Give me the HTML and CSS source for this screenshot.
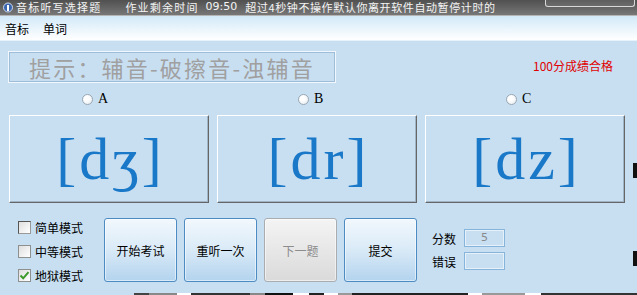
FILE: index.html
```html
<!DOCTYPE html>
<html lang="zh">
<head>
  <meta charset="UTF-8">
  <title>音标听写选择题</title>
  <link rel="stylesheet" href="styles.css">
</head>
<body>
  <div class="window">
    <header class="titlebar">
      <svg class="app-icon" width="10" height="11" viewBox="0 0 10 11">
        <circle cx="5" cy="5.5" r="4.5" fill="#3a66b0" stroke="#cfd8e8" stroke-width="1"/>
        <rect x="4" y="3" width="2" height="6" fill="#fff"/>
      </svg>
      <span class="title-name">音标听写选择题</span>
      <span class="title-timer">作业剩余时间</span>
      <span class="title-time">09:50</span>
      <span class="title-note">超过4秒钟不操作默认你离开软件自动暂停计时的</span>
      <span class="title-btn"></span>
    </header>
    <nav class="menubar">
      <span>音标</span>
      <span>单词</span>
    </nav>
    <main class="main">
      <div class="hint-row">
        <div class="hint">提示：辅音-破擦音-浊辅音</div>
        <div class="pass">100分成绩合格</div>
      </div>
      <div class="options">
        <label class="radio"><span class="dot"></span>A</label>
        <label class="radio"><span class="dot"></span>B</label>
        <label class="radio"><span class="dot"></span>C</label>
      </div>
      <div class="cards">
        <button class="card">[dʒ]</button>
        <button class="card">[dr]</button>
        <button class="card">[dz]</button>
      </div>
      <div class="controls">
        <div class="modes">
          <label class="check"><span class="box focus"></span>简单模式</label>
          <label class="check"><span class="box"></span>中等模式</label>
          <label class="check">
            <span class="box">
              <svg width="11" height="11" viewBox="0 0 11 11"><path d="M1.5 5.5 L4.2 8.3 L9.5 2.2" fill="none" stroke="#3c9a2a" stroke-width="2"/></svg>
            </span>地狱模式
          </label>
        </div>
        <button class="btn">开始考试</button>
        <button class="btn">重听一次</button>
        <button class="btn disabled">下一题</button>
        <button class="btn">提交</button>
        <div class="score">
          <div class="field"><span class="field-label">分数</span><span class="input">5</span></div>
          <div class="field"><span class="field-label">错误</span><span class="input"></span></div>
        </div>
      </div>
    </main>
    <div class="taskbar"></div>
    <span class="edge edge-top"></span>
    <span class="edge edge-bottom"></span>
  </div>
</body>
</html>
```

FILE: styles.css
```css
:root {
  --bg: #c8dff2;
  --ink: #000;
  --blue: #1a78c8;
  --cjk: "Noto Sans CJK SC", "Noto Sans", sans-serif;
}
* { box-sizing: border-box; }
body { margin: 0; width: 637px; height: 295px; overflow: hidden; background: #fff; font-family: var(--cjk); font-size: 12px; color: var(--ink); }
.window { position: relative; height: 295px; display: flex; flex-direction: column; }

/* title bar */
.titlebar { height: 16px; flex: none; display: flex; align-items: flex-start; overflow: hidden; background: linear-gradient(#505050, #777); border-bottom: 1px solid #b5b5b5; color: #f4f4f4; white-space: nowrap; font-size: 11px; line-height: 14px; }
.titlebar span { letter-spacing: 1.2px; }
.app-icon { margin: 2px 0 0 3px; flex: none; }
.title-name { margin-left: 3px; }
.title-timer { margin-left: 24px; }
.title-time { margin-left: 7px; font-family: "DejaVu Sans", sans-serif; letter-spacing: 0 !important; }
.title-note { margin-left: 8px; letter-spacing: 0.6px !important; }
.title-btn { margin-left: auto; margin-right: 2px; width: 90px; height: 7px; border: 1px solid #d8d8d8; border-top: 0; border-radius: 0 0 3px 3px; background: rgba(255,255,255,0.08); }

/* menu */
.menubar { height: 24px; flex: none; display: flex; align-items: center; gap: 14px; padding-left: 5px; background: linear-gradient(#d2e9f8, #fff); }

.main { flex: 1; background: var(--bg); border-top: 1px solid #e6f1fa; }

.hint-row { display: flex; align-items: center; height: 32px; margin-top: 10px; padding: 0 24px 0 8px; }
.hint { width: 328px; height: 32px; border: 1px solid #f1f7fc; box-shadow: inset 0 0 0 1px #9dbdd8; padding-left: 20px; font-size: 22px; line-height: 30px; color: #a0a0a0; letter-spacing: 2.2px; white-space: nowrap; }
.pass { margin-left: auto; margin-top: -4px; color: #e00000; font-size: 12px; }

.options { display: grid; grid-template-columns: repeat(3, 200px); column-gap: 8px; height: 14px; margin-top: 8px; padding-left: 9px; }
.radio { display: flex; align-items: center; gap: 5px; padding-left: 81px; font-family: "Liberation Serif", serif; font-size: 14px; }
.radio:first-child { padding-left: 73px; }
.dot { width: 11px; height: 11px; border-radius: 50%; border: 1px solid #9ba8b4; background: radial-gradient(circle at 40% 35%, #fff 30%, #e1e6eb); }

.cards { display: grid; grid-template-columns: repeat(3, 200px); gap: 8px; margin-top: 10px; padding-left: 9px; }
.card { height: 88px; padding: 0 0 0 3px; border: 1px solid; border-color: #fff #666 #666 #fff; box-shadow: inset -1px -1px 0 #9fb4c6; background: var(--bg); font-family: "Liberation Serif", "DejaVu Serif", serif; font-size: 60px; line-height: 1; letter-spacing: 3px; color: var(--blue); }

.controls { display: flex; align-items: flex-start; margin-top: 15px; padding-left: 18px; }
.modes { width: 79px; margin-right: 7px; display: flex; flex-direction: column; gap: 6px; }
.check { display: flex; align-items: center; gap: 4px; height: 18px; }
.box { width: 13px; height: 13px; display: flex; align-items: center; justify-content: center; border: 1px solid #8e8f8f; background: linear-gradient(135deg, #dedede, #fff); }
.box.focus { border-color: #555 #999 #999 #555; }
.btn { width: 73px; height: 64px; margin-right: 7px; padding: 0; border: 1px solid #4c8cc2; border-radius: 3px; box-shadow: inset 0 0 0 1px rgba(255,255,255,0.5); background: linear-gradient(#f2f8fd, #d9eaf7 50%, #b3d3ee); font-family: var(--cjk); font-size: 12px; color: var(--ink); }
.btn.disabled { border-color: #a9adb0; background: linear-gradient(#f4f4f4, #dadada); color: #8d8d8d; }

.score { margin-left: 8px; padding-top: 11px; display: flex; flex-direction: column; gap: 5px; }
.field { display: flex; align-items: center; gap: 8px; }
.field-label { width: 24px; }
.input { width: 41px; height: 18px; border: 1px solid #86b4da; box-shadow: inset 0 0 0 1px #e6f0f8; text-align: center; line-height: 16px; color: #8a8a8a; font-family: "DejaVu Sans", sans-serif; font-size: 11px; }

.taskbar { height: 2px; flex: none; background: linear-gradient(90deg, var(--bg) 0 134px, #444 134px 149px, #888 149px 177px, #fff 177px 191px, #333 191px 250px, #888 250px 265px, #111 265px 293px, #fff 293px 309px, #222 309px 324px, #fff 324px 338px, #999 338px 352px, #222 352px 468px, #fff 468px 482px, #999 482px 525px, #fff 525px 541px, #333 541px); }

/* bits of other windows peeking in at the right edge */
.edge { position: absolute; right: 0; width: 4px; background: #111; }
.edge-top { top: 163px; height: 15px; }
.edge-bottom { top: 251px; height: 15px; }
```
